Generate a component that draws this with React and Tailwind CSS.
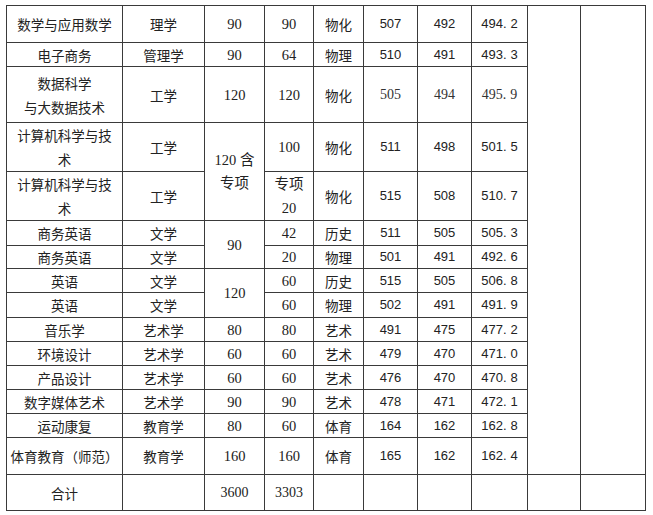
import React from "react";

const cjk = "font-['Noto_Sans_CJK_SC',sans-serif]";
const serif = "font-['Liberation_Serif','Noto_Sans_CJK_SC',serif]";
const sans = "font-['Liberation_Sans','Noto_Sans_CJK_SC',sans-serif]";

const Two = ({ a, b, lh = "leading-[24px]" }) => (
  <span className={`block ${lh}`}>
    {a}
    <br />
    {b}
  </span>
);

const rows = [
  { h: 37, name: "数学与应用数学", cat: "理学", plan: "90", enrol: "90", subj: "物化", max: "507", min: "492", avg: "494.2" },
  { h: 24, name: "电子商务", cat: "管理学", plan: "90", enrol: "64", subj: "物理", max: "510", min: "491", avg: "493.3" },
  { h: 56, name: <Two a="数据科学" b="与大数据技术" />, cat: "工学", plan: "120", enrol: "120", subj: "物化", max: "505", min: "494", avg: "495.9", serifNums: true },
  { h: 48, name: <Two a="计算机科学与技" b="术" />, cat: "工学", plan: <Two a="120 含" b="专项" lh="leading-[23px]" />, planSpan: 2, enrol: "100", subj: "物化", max: "511", min: "498", avg: "501.5" },
  { h: 47, name: <Two a="计算机科学与技" b="术" />, cat: "工学", enrol: <Two a="专项" b="20" />, subj: "物化", max: "515", min: "508", avg: "510.7" },
  { h: 25, name: "商务英语", cat: "文学", plan: "90", planSpan: 2, enrol: "42", subj: "历史", max: "511", min: "505", avg: "505.3" },
  { h: 23, name: "商务英语", cat: "文学", enrol: "20", subj: "物理", max: "501", min: "491", avg: "492.6" },
  { h: 24, name: "英语", cat: "文学", plan: "120", planSpan: 2, enrol: "60", subj: "历史", max: "515", min: "505", avg: "506.8" },
  { h: 25, name: "英语", cat: "文学", enrol: "60", subj: "物理", max: "502", min: "491", avg: "491.9" },
  { h: 24, name: "音乐学", cat: "艺术学", plan: "80", enrol: "80", subj: "艺术", max: "491", min: "475", avg: "477.2" },
  { h: 24, name: "环境设计", cat: "艺术学", plan: "60", enrol: "60", subj: "艺术", max: "479", min: "470", avg: "471.0" },
  { h: 24, name: "产品设计", cat: "艺术学", plan: "60", enrol: "60", subj: "艺术", max: "476", min: "470", avg: "470.8" },
  { h: 24, name: "数字媒体艺术", cat: "艺术学", plan: "90", enrol: "90", subj: "艺术", max: "478", min: "471", avg: "472.1" },
  { h: 24, name: "运动康复", cat: "教育学", plan: "80", enrol: "60", subj: "体育", max: "164", min: "162", avg: "162.8" },
  { h: 37, name: "体育教育（师范）", cat: "教育学", plan: "160", enrol: "160", subj: "体育", max: "165", min: "162", avg: "162.4" },
];

const td = "border border-[#3a3a3a] p-0 text-center align-middle leading-[18px]";

// decimals in the source have a wide gap after the point
const Dec = ({ v }) => {
  const [a, b] = v.split(".");
  return (
    <>
      {a}
      <span className="mr-[4px]">.</span>
      {b}
    </>
  );
};

export default function App() {
  return (
    <div className="bg-white min-h-screen pt-[5px] pl-[6px]">
      <table className="table-fixed border-collapse w-[639px] text-[#222]">
        <colgroup>
          <col className="w-[116px]" />
          <col className="w-[82px]" />
          <col className="w-[60px]" />
          <col className="w-[49px]" />
          <col className="w-[50px]" />
          <col className="w-[54px]" />
          <col className="w-[54px]" />
          <col className="w-[56px]" />
          <col className="w-[53px]" />
          <col className="w-[65px]" />
        </colgroup>
        <tbody>
          {rows.map((r, i) => {
            const num = r.serifNums ? `${serif} text-[14px] text-[#333]` : `${sans} text-[13px] text-[#222]`;
            return (
              <tr key={i} style={{ height: r.h }}>
                <td className={`${td} ${cjk} text-[13.5px]`}>{r.name}</td>
                <td className={`${td} ${cjk} text-[13.5px]`}>{r.cat}</td>
                {r.plan !== undefined && (
                  <td rowSpan={r.planSpan || 1} className={`${td} ${serif} text-[14.5px]`}>{r.plan}</td>
                )}
                <td className={`${td} ${serif} text-[14.5px]`}>{r.enrol}</td>
                <td className={`${td} ${cjk} text-[13.5px]`}>{r.subj}</td>
                <td className={`${td} ${num}`}>{r.max}</td>
                <td className={`${td} ${num}`}>{r.min}</td>
                <td className={`${td} ${num}`}><Dec v={r.avg} /></td>
                {i === 0 && (
                  <>
                    <td rowSpan={15} className={td}></td>
                    <td rowSpan={15} className={td}></td>
                  </>
                )}
              </tr>
            );
          })}
          <tr className="h-[36px]">
            <td className={`${td} ${cjk} text-[13.5px]`}>合计</td>
            <td className={td}></td>
            <td className={`${td} ${serif} text-[14px]`}>3600</td>
            <td className={`${td} ${serif} text-[14px]`}>3303</td>
            <td className={td}></td>
            <td className={td}></td>
            <td className={td}></td>
            <td className={td}></td>
            <td className={td}></td>
            <td className={td}></td>
          </tr>
        </tbody>
      </table>
    </div>
  );
}
